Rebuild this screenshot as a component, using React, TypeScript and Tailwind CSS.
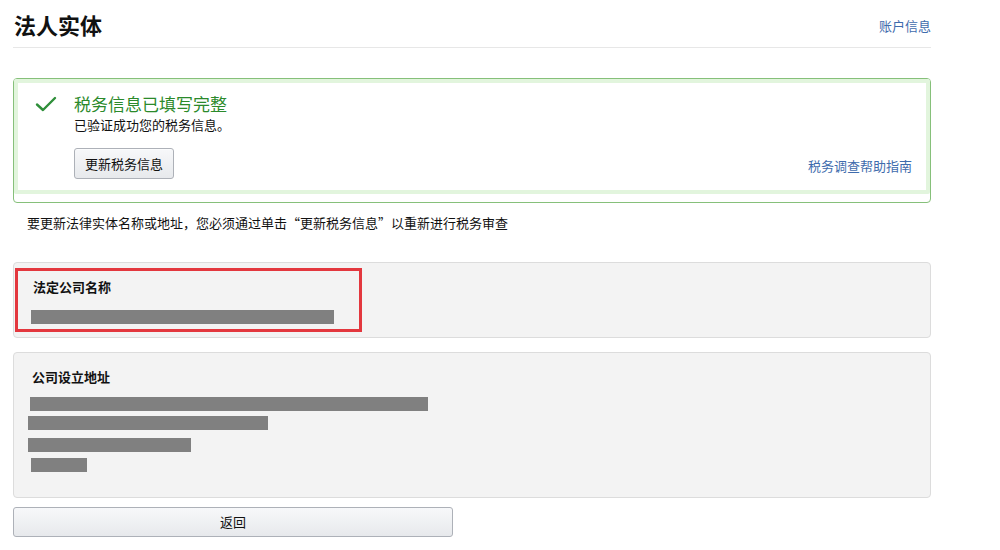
import React from "react";

const font = { fontFamily: '"Noto Sans CJK SC", "Liberation Sans", sans-serif' };

function Bar({ w, ml = 0 }: { w: number; ml?: number }) {
  return <div className="h-[14px] bg-[#808080]" style={{ width: w, marginLeft: ml }} />;
}

export default function App() {
  return (
    <div className="w-[1000px] h-[550px] bg-white text-[#111] overflow-hidden" style={font}>
      <div className="ml-[13px] w-[918px]">
        {/* header */}
        <div className="flex items-end justify-between h-[48px] border-b border-[#e7e7e7] pb-[8px]">
          <h1 className="ml-[1px] text-[22px] font-bold leading-[29px] text-[#111]">法人实体</h1>
          <a className="text-[13px] leading-[18px] text-[#3f6cad] mb-[4px]">账户信息</a>
        </div>

        {/* success box */}
        <div className="mt-[30px] h-[125px] rounded-[4px] border border-[#86c07a] p-[4px]">
          <div className="h-full rounded-[2px] ring-4 ring-[#e2f5dd] ring-inset -m-[4px] p-[4px]">
            <div className="flex h-full">
              <div className="w-[56px] pl-[17px] pt-[13px]">
                <svg width="22" height="16" viewBox="0 0 22 16" fill="none">
                  <path d="M2 8.5 L8 14 L20 2" stroke="#2f8f3a" strokeWidth="2.4" strokeLinecap="round" strokeLinejoin="round" />
                </svg>
              </div>
              <div className="flex-1 flex flex-col pt-[10px]">
                <div className="text-[17px] leading-[22px] text-[#2b8a2b]">税务信息已填写完整</div>
                <div className="text-[13px] leading-[17px] text-[#111] mt-[1px]">已验证成功您的税务信息。</div>
                <div className="flex items-end justify-between mt-[15px] pr-[14px]">
                  <button className="h-[31px] px-[10px] rounded-[3px] border border-[#adb1b8] bg-gradient-to-b from-[#f7f8fa] to-[#e7e9ec] text-[13px] text-[#111] shadow-[0_1px_0_rgba(255,255,255,0.6)_inset]">
                    更新税务信息
                  </button>
                  <a className="text-[13px] leading-[18px] text-[#3f6cad] mb-[4px]">税务调查帮助指南</a>
                </div>
              </div>
            </div>
          </div>
        </div>

        <p className="ml-[14px] mt-[11px] text-[13px] leading-[18px] text-[#111]">
          要更新法律实体名称或地址，您必须通过单击“更新税务信息”以重新进行税务审查
        </p>

        {/* legal name box */}
        <div className="mt-[30px] h-[76px] rounded-[4px] border border-[#dcdcdc] bg-[#f3f3f3] pt-[5px] pl-[1px]">
          <div className="w-[347px] h-[64px] border-[3px] border-[#e3373e] pl-[15px] pt-[7px]">
            <div className="text-[13px] font-bold leading-[18px] text-[#111]">法定公司名称</div>
            <div className="mt-[14px] -ml-[2px]">
              <Bar w={303} />
            </div>
          </div>
        </div>

        {/* address box */}
        <div className="mt-[14px] h-[146px] rounded-[4px] border border-[#dcdcdc] bg-[#f3f3f3] pl-[14px] pt-[15px]">
          <div className="ml-[4px] text-[13px] font-bold leading-[18px] text-[#111]">公司设立地址</div>
          <div className="mt-[11px] flex flex-col">
            <Bar w={398} ml={2} />
            <div className="h-[5px]" />
            <Bar w={240} />
            <div className="h-[8px]" />
            <Bar w={163} />
            <div className="h-[6px]" />
            <Bar w={56} ml={3} />
          </div>
        </div>

        {/* back button */}
        <button className="mt-[9px] w-[440px] h-[30px] rounded-[3px] border border-[#adb1b8] bg-gradient-to-b from-[#f7f8fa] to-[#e7e9ec] text-[13px] text-[#111]">
          返回
        </button>
      </div>
    </div>
  );
}
